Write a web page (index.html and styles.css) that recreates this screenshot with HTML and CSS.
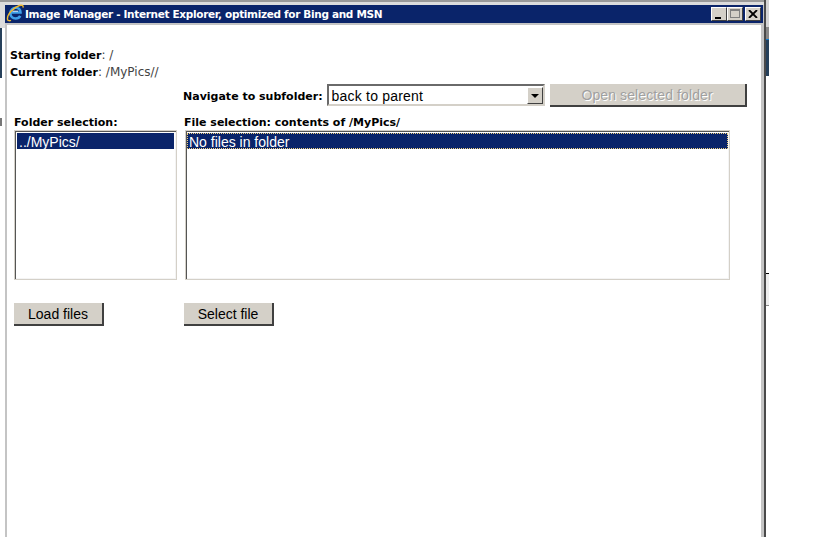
FILE: index.html
```html
<!DOCTYPE html>
<html>
<head lang="en">
    <meta charset="UTF-8">
    <title>Image Manager</title>
    <link rel="stylesheet" href="styles.css">
</head>
<body>
<!-- bits of the page behind the popup -->
<div class="behind left-top"></div>
<div class="behind left-dark"></div>
<div class="behind left-mark"></div>
<div class="behind right-top"></div>
<div class="behind right-dark"></div>
<div class="behind right-box"></div>

<div id="win">
    <div class="frame-top"></div>
    <div class="titlebar">
        <svg class="ie" width="18" height="18" viewBox="0 0 18 18">
            <path d="M5 8.500h9.500C14.500 5.500 12.400 3.800 9.800 3.800 6.800 3.800 4.400 6 4.400 9.300c0 3.200 2.300 5.200 5.300 5.200 2.100 0 3.700-1 4.500-2.600" fill="none" stroke="#3fa0e8" stroke-width="2.600"/>
            <path d="M6.500 7.200h5.500" stroke="#e8f4ff" stroke-width="1"/>
            <path d="M1.500 15.500C.8 11 7 3.500 13.500 1.500c2.500-.8 4 0 3.500 2.200M1.500 15.500c.3 1.300 2 1.500 3.500.8" fill="none" stroke="#f0b92e" stroke-width="1.400"/>
        </svg>
        <span class="title">Image Manager - Internet Explorer, optimized for Bing and MSN</span>
        <div class="winbtns">
            <span class="wbtn"><i class="min"></i></span>
            <span class="wbtn"><i class="max"></i></span>
            <span class="wbtn close">
                <svg width="10" height="8" viewBox="0 0 10 8"><path d="M1 0l8 8M9 0L1 8" stroke="#000" stroke-width="1.800"/></svg>
            </span>
        </div>
    </div>

    <div class="content">
        <p class="line"><b>Starting folder</b>: /</p>
        <p class="line"><b>Current folder</b>: /MyPics//</p>

        <div class="nav">
            <b>Navigate to subfolder:</b>
            <div class="select">
                <span class="select-text">back to parent</span>
                <span class="select-arrow"></span>
            </div>
            <span class="btn btn-open">Open selected folder</span>
        </div>

        <div class="columns">
            <div class="col col-folder">
                <b class="label">Folder selection:</b>
                <div class="list"><div class="row">../MyPics/</div></div>
                <span class="btn">Load files</span>
            </div>
            <div class="col col-file">
                <b class="label">File selection: contents of /MyPics/</b>
                <div class="list"><div class="row focus">No files in folder</div></div>
                <span class="btn">Select file</span>
            </div>
        </div>
    </div>
</div>
</body>
</html>
```

FILE: styles.css
```css
*{ margin:0; padding:0; box-sizing:border-box; }
html,body{ height:100%; overflow:hidden; background:#fff; }
body{ font-family:"Liberation Sans",Arial,sans-serif; font-size:14px; color:#000; }

.behind{ position:absolute; }
.left-top{ left:0; top:0; width:5px; height:28px; background:#dcdcdc; border-top:2px solid #999; }
.left-dark{ left:0; top:28px; width:2px; height:50px; background:#26405a; }
.left-mark{ left:0; top:118px; width:2px; height:8px; background:#777; }
.right-top{ left:766px; top:0; width:3px; height:27px; background:#d4d4d4; }
.right-dark{ left:766px; top:27px; width:3px; height:49px; background:linear-gradient(#888 0,#888 12px,#0a7ad0 12px,#0a7ad0 13px,#26405a 13px); }
.right-box{ left:766px; top:273px; width:3px; height:33px; background:#eee; border-top:1px solid #000; border-bottom:1px solid #888; }

#win{ width:761px; height:537px; margin-left:5px; border-right:2px solid #4a4a4a; background:#c4c4c4; display:flex; flex-direction:column; }
.frame-top{ height:5px; flex:none; background:#dcdcdc; border-top:2px solid #999; }

.titlebar{ height:18px; margin-right:1px; background:#0a246a; display:flex; align-items:center; flex:none; position:relative; }
.ie{ position:absolute; left:1px; top:-1px; }
.title{ margin-left:20px; color:#fff; font-family:"DejaVu Sans",Verdana,sans-serif; font-weight:bold; font-size:10.500px; letter-spacing:-.33px; white-space:nowrap; }
.winbtns{ margin-left:auto; margin-right:2px; display:flex; }
.wbtn{ width:16px; height:14px; background:#d4d0c8; border:1px solid; border-color:#fff #404040 #404040 #fff; position:relative; display:block; }
.wbtn.close{ margin-left:2px; display:flex; align-items:center; justify-content:center; }
.min{ position:absolute; left:3px; bottom:1px; width:6px; height:2px; background:#000; }
.max{ position:absolute; left:2px; top:1px; width:10px; height:9px; border:1px solid #808080; border-top-width:2px; }

.content{ flex:1; margin:2px 3px 0 2px; background:#fff; padding:22px 0 0 3px; font-family:"DejaVu Sans",Verdana,sans-serif; font-size:12px; color:#444; }
.content b{ color:#000; font-size:11px; }
.line{ height:17px; line-height:17px; }

.nav{ display:flex; align-items:flex-start; margin:3px 0 0 173px; height:23px; }
.nav b{ white-space:nowrap; line-height:26px; }
.select{ width:218px; height:22px; margin-left:4px; border:2px solid; border-color:#6a6a6a #d4d0c8 #d4d0c8 #6a6a6a; display:flex; align-items:center; font-family:"Liberation Sans",Arial,sans-serif; font-size:14px; letter-spacing:.2px; color:#000; }
.select-text{ flex:1; padding-left:3px; line-height:20px; padding-top:2px; }
.select-arrow{ width:16px; height:17px; background:#d4d0c8; border:1px solid; border-color:#fff #404040 #404040 #fff; position:relative; }
.select-arrow:after{ content:""; position:absolute; left:3px; top:6px; border:4px solid transparent; border-top-color:#000; border-bottom:0; }

.btn{ display:block; width:90px; height:23px; line-height:23px; text-align:center; background:#d4d0c8; border:solid #404040; border-width:0 2px 2px 0; font-family:"Liberation Sans",Arial,sans-serif; font-size:14px; color:#000; }
.btn-open{ width:197px; margin-left:5px; color:#a0a0a0; letter-spacing:.1px; text-shadow:1px 1px 0 #fff; }

.columns{ display:flex; margin:7px 0 0 4px; }
.col{ flex:none; }
.col-folder{ width:170px; }
.col-file{ width:546px; }
.label{ display:block; height:16px; line-height:18px; }
.list{ height:150px; border:1px solid #d4d0c8; box-shadow:inset 1px 1px 0 #555, inset -1px -1px 0 #f4f4f4; padding:2px; font-family:"Liberation Sans",Arial,sans-serif; font-size:14px; margin-right:7px; }
.col-file .list{ margin:0 0 0 1px; padding:2px 1px; }
.row{ height:16px; line-height:18px; background:#0a246a; color:#fff; padding-left:2px; }
.row.focus{ outline:1px dotted #f0d080; outline-offset:-1px; }
.col .btn{ margin-top:23px; }
```
